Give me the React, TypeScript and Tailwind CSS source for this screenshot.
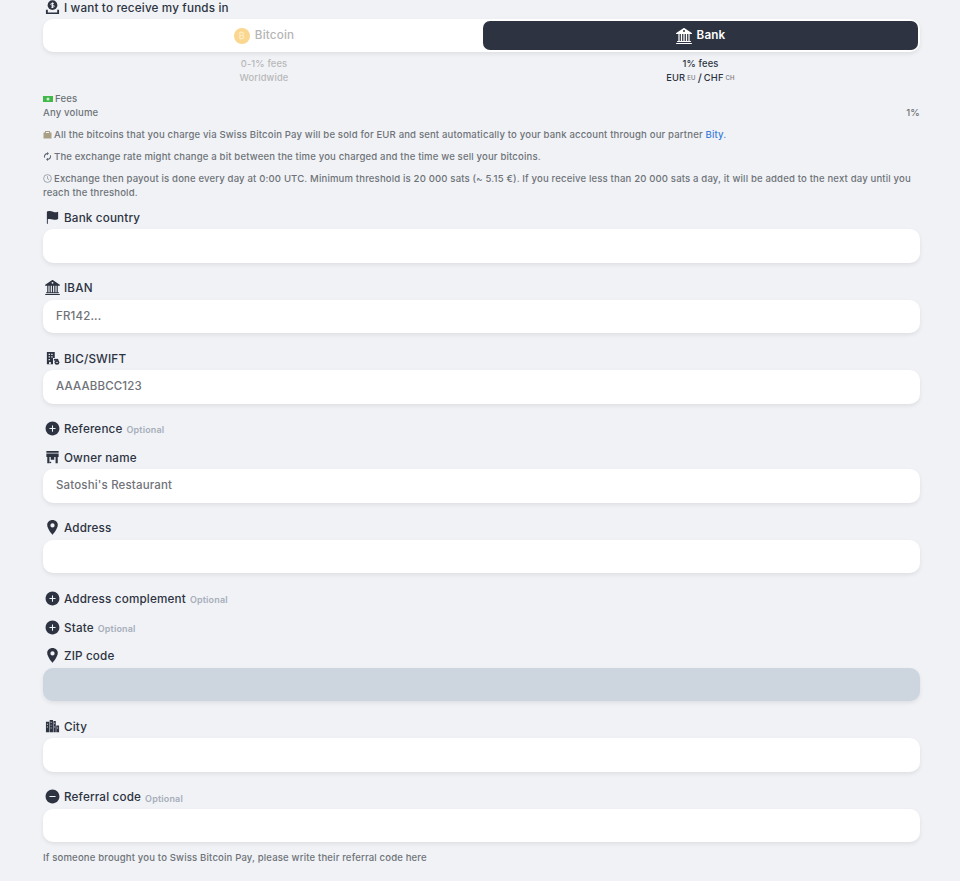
import type { ReactNode } from 'react'
import { IoAddCircle, IoFlag, IoLocationSharp, IoRemoveCircle } from 'react-icons/io5'
import { BsBank2 } from 'react-icons/bs'

function MoneyIcon() {
  return (
    <svg viewBox="0 0 16 16" className="h-[15px] w-[15px]">
      <circle cx="8" cy="5.5" r="5.2" fill="#2d3341" />
      <path d="M9.6 3.6H7.2a1 1 0 0 0 0 2h1.6a1 1 0 0 1 0 2H6.4M8 2.6v6" fill="none" stroke="#fff" strokeWidth="0.9" />
      <path d="M1 10.5v4.5h14v-4.5h-2v2.7H3v-2.7z" fill="#2d3341" />
    </svg>
  )
}

function BuildingIcon() {
  return (
    <svg viewBox="0 0 16 16" className="h-[14px] w-[14px]">
      <path d="M1 1h9v7H8v7H1z" fill="#2d3341" />
      <path d="M3 3h1.5v1.5H3zM6 3h1.5v1.5H6zM3 6h1.5v1.5H3zM6 6h1.5v1.5H6zM3 9h1.5v1.5H3zM3.5 12.5h2V15h-2z" fill="#f0f2f6" />
      <path d="M9 9h5v2H9z" fill="#2d3341" />
      <circle cx="12.5" cy="13" r="2.8" fill="#2d3341" />
      <path d="M11.2 13h2.6" stroke="#f0f2f6" strokeWidth="0.9" />
    </svg>
  )
}

function CityIcon() {
  return (
    <svg viewBox="0 0 16 16" className="h-[15px] w-[15px] shrink-0">
      <path d="M1 3h3.5v11H1zM5 1h3.5v13H5zM9 2h2.5v12H9zM12 7h3v7h-3z" fill="#2d3341" />
      <path d="M2 5h1v1H2zM2 8h1v1H2zM6 3h1v1H6zM6 6h1v1H6zM6 9h1v1H6zM10 4h.8v1H10zM10 8h.8v1H10zM13 9h1v1h-1z" fill="#f0f2f6" />
    </svg>
  )
}

function StoreIcon() {
  return (
    <svg viewBox="0 0 16 16" className="h-[14px] w-[15px]">
      <path d="M1 1h14v2H1zM1 4h14v4H1zM2 8h2.5v7H2zM11.5 8H14v7h-2.5zM6 8h4v3H6z" fill="#2d3341" />
      <path d="M4.5 13.5h2V15h-2z" fill="#2d3341" />
    </svg>
  )
}

function Label({ icon, label, optional }: { icon: ReactNode; label: string; optional?: boolean }) {
  return (
    <div className="flex h-[22px] items-center gap-[4px] pt-[1px] pl-[3px] text-[11.7px] font-medium text-[#2d3341]">
      <span className="-mt-[3px] -ml-[1px] flex w-[15px] items-center justify-center text-[15px]">{icon}</span>
      <span>{label}</span>
      {optional && <span className="text-[9px] font-semibold text-[#a7aeba]">Optional</span>}
    </div>
  )
}

function Field({ icon, label, optional, value, disabled }: { icon: ReactNode; label: string; optional?: boolean; value?: string; disabled?: boolean }) {
  return (
    <div className="mb-[15px]">
      <Label icon={icon} label={label} optional={optional} />
      <div className={`flex h-[33.5px] items-center rounded-[10px] px-[13px] text-[11.5px] font-medium text-[#6f7278] shadow-[0_2px_4px_rgba(0,0,0,0.08)] ${disabled ? 'bg-[#cdd5df]' : 'bg-white'}`}>
        {value}
      </div>
    </div>
  )
}

function Toggle({ label, minus }: { label: string; minus?: boolean }) {
  return (
    <div className={minus ? '' : 'mb-[6.75px]'}>
      <Label
        icon={minus ? <IoRemoveCircle className="shrink-0 text-[17px]" /> : <IoAddCircle className="shrink-0 text-[17px]" />}
        label={label}
        optional
      />
    </div>
  )
}

export default function App() {
  return (
    <div className="flow-root h-[881px] overflow-hidden bg-[#f0f2f6] pr-[40px] pl-[43px] font-['Inter',sans-serif] tracking-[0.01em]">
      <div className="-mt-[3px]">
        <Label icon={<MoneyIcon />} label="I want to receive my funds in" />
      </div>
      <div className="grid h-[33px] grid-cols-[438px_1fr] rounded-[10px] bg-white p-[2px] shadow-[0_2px_4px_rgba(0,0,0,0.08)]">
        <div className="flex items-center justify-center gap-[5px] text-[11.7px] font-medium text-[#b5b5b5]">
          <span className="flex h-[16px] w-[16px] items-center justify-center rounded-full bg-[#fbd68f] text-[9px] text-[#fdeecb]">₿</span>
          Bitcoin
        </div>
        <div className="flex items-center justify-center gap-[5px] rounded-[7px] bg-[#2d3341] text-[11.7px] font-semibold text-white">
          <BsBank2 className="text-[16px]" />
          Bank
        </div>
      </div>
      <div className="mt-[5px] grid grid-cols-[438px_1fr] px-[2px] text-center text-[9.3px] leading-[14px] font-medium">
        <div className="text-[#b8b8b8]">
          <div>0-1% fees</div>
          <div>Worldwide</div>
        </div>
        <div className="text-[#2d3341]">
          <div>1% fees</div>
          <div className="flex items-center justify-center gap-[2px]">
            EUR <span className="text-[6px] text-[#777]">EU</span> <span className="text-[11px]">/</span> CHF <span className="text-[6px] text-[#777]">CH</span>
          </div>
        </div>
      </div>

      <div className="mt-[7px] text-[9.55px] leading-[14px] font-medium text-[#6f7278]">
        <div className="flex items-center gap-[2px]">
          <svg viewBox="0 0 10 6" className="h-[6px] w-[10px]">
            <rect width="10" height="6" fill="#41b84a" />
            <circle cx="5" cy="3" r="1.5" fill="#cfeecf" />
          </svg>
          Fees
        </div>
        <div className="flex justify-between">
          <span>Any volume</span>
          <span>1%</span>
        </div>
      </div>

      <div className="mt-[8px] flex flex-col gap-[8px] text-[9.55px] leading-[14px] font-medium text-[#6f7278]">
        <p>
          <svg viewBox="0 0 9 9" className="mr-[2px] inline-block h-[9px] w-[9px] align-[-1px]">
            <path d="M2 1h5v1.5h1.5V8.5H.5V2.5H2z" fill="#a89f85" />
            <path d="M3 2h3v1H3z" fill="#f0f2f6" />
          </svg>
          All the bitcoins that you charge via Swiss Bitcoin Pay will be sold for EUR and sent automatically to your bank account through our partner <span className="text-[#3b7dd8]">Bity.</span>
        </p>
        <p>
          <svg viewBox="0 0 9 9" className="mr-[2px] inline-block h-[9px] w-[9px] align-[-1px]">
            <path d="M1.6 5.6A3 3 0 0 1 4.5 1.6M7.4 3.4A3 3 0 0 1 4.5 7.4" fill="none" stroke="#5f6670" strokeWidth="1.1" />
            <path d="M4 0l2 1.6-2 1.6zM5 9 3 7.4l2-1.6z" fill="#5f6670" />
          </svg>
          The exchange rate might change a bit between the time you charged and the time we sell your bitcoins.
        </p>
        <p>
          <svg viewBox="0 0 9 9" className="mr-[2px] inline-block h-[9px] w-[9px] align-[-1px]">
            <circle cx="4.5" cy="4.5" r="3.9" fill="none" stroke="#7f858e" strokeWidth="0.7" />
            <path d="M4.5 2.2v2.5l1.7 1" fill="none" stroke="#7f858e" strokeWidth="0.7" />
          </svg>
          Exchange then payout is done every day at 0:00 UTC. Minimum threshold is 20 000 sats (~ 5.15 €). If you receive less than 20 000 sats a day, it will be added to the next day until you reach the threshold.
        </p>
      </div>

      <div className="mt-[7px]">
        <Field icon={<IoFlag />} label="Bank country" />
        <Field icon={<BsBank2 />} label="IBAN" value="FR142..." />
        <Field icon={<BuildingIcon />} label="BIC/SWIFT" value="AAAABBCC123" />
        <Toggle label="Reference" />
        <Field icon={<StoreIcon />} label="Owner name" value="Satoshi's Restaurant" />
        <Field icon={<IoLocationSharp className="shrink-0 text-[17px]" />} label="Address" />
        <Toggle label="Address complement" />
        <Toggle label="State" />
        <Field icon={<IoLocationSharp className="shrink-0 text-[17px]" />} label="ZIP code" disabled />
        <Field icon={<CityIcon />} label="City" />
        <Toggle label="Referral code" minus />
        <div className="h-[33.5px] rounded-[10px] bg-white shadow-[0_2px_4px_rgba(0,0,0,0.08)]" />
        <p className="mt-[9px] text-[9.55px] font-medium text-[#6f7278]">If someone brought you to Swiss Bitcoin Pay, please write their referral code here</p>
      </div>
    </div>
  )
}
